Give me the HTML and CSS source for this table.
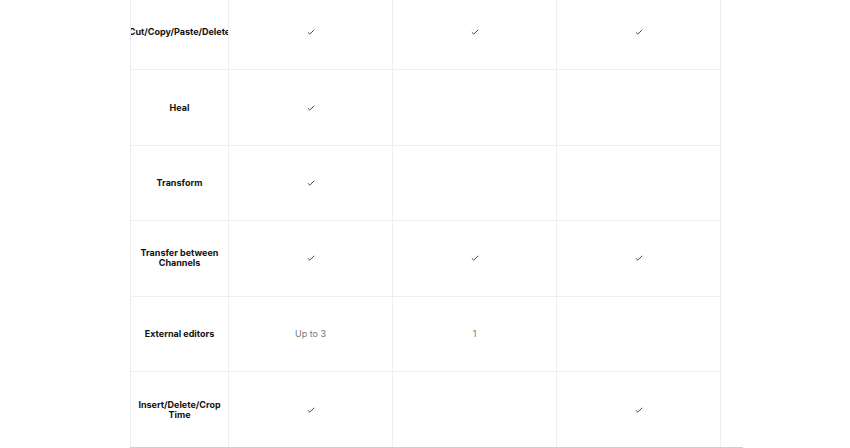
FILE: index.html
```html
<!DOCTYPE html>
<html>
<head>
<meta charset="utf-8">
<link rel="stylesheet" href="styles.css">
</head>
<body>
<div class="page">
  <div class="table">
    <div class="grid">
      <div class="cell label"><span class="nowrap">Cut/Copy/Paste/Delete</span></div>
      <div class="cell"><svg class="check" viewBox="0 0 8 6"><polyline points="0.8,3.2 2.8,5.1 7.2,0.8"/></svg></div>
      <div class="cell"><svg class="check" viewBox="0 0 8 6"><polyline points="0.8,3.2 2.8,5.1 7.2,0.8"/></svg></div>
      <div class="cell"><svg class="check" viewBox="0 0 8 6"><polyline points="0.8,3.2 2.8,5.1 7.2,0.8"/></svg></div>

      <div class="cell label"><span>Heal</span></div>
      <div class="cell"><svg class="check" viewBox="0 0 8 6"><polyline points="0.8,3.2 2.8,5.1 7.2,0.8"/></svg></div>
      <div class="cell"></div>
      <div class="cell"></div>

      <div class="cell label"><span>Transform</span></div>
      <div class="cell"><svg class="check" viewBox="0 0 8 6"><polyline points="0.8,3.2 2.8,5.1 7.2,0.8"/></svg></div>
      <div class="cell"></div>
      <div class="cell"></div>

      <div class="cell label"><span>Transfer between Channels</span></div>
      <div class="cell"><svg class="check" viewBox="0 0 8 6"><polyline points="0.8,3.2 2.8,5.1 7.2,0.8"/></svg></div>
      <div class="cell"><svg class="check" viewBox="0 0 8 6"><polyline points="0.8,3.2 2.8,5.1 7.2,0.8"/></svg></div>
      <div class="cell"><svg class="check" viewBox="0 0 8 6"><polyline points="0.8,3.2 2.8,5.1 7.2,0.8"/></svg></div>

      <div class="cell label"><span>External editors</span></div>
      <div class="cell value">Up to 3</div>
      <div class="cell value">1</div>
      <div class="cell"></div>

      <div class="cell label"><span>Insert/Delete/Crop Time</span></div>
      <div class="cell"><svg class="check" viewBox="0 0 8 6"><polyline points="0.8,3.2 2.8,5.1 7.2,0.8"/></svg></div>
      <div class="cell"></div>
      <div class="cell"><svg class="check" viewBox="0 0 8 6"><polyline points="0.8,3.2 2.8,5.1 7.2,0.8"/></svg></div>
    </div>
  </div>
</div>
</body>
</html>
```

FILE: styles.css
```css
html, body {
  margin: 0;
  padding: 0;
  background: #ffffff;
  overflow: hidden;
}

.page {
  width: 850px;
  height: 448px;
  overflow: hidden;
  padding-left: 130px;
  box-sizing: border-box;
}

.table {
  width: 613px;
  margin-top: -5px;
  border-bottom: 1px solid #cfcfcf;
}

.grid {
  display: grid;
  grid-template-columns: 98px 164px 164px 164px;
  grid-auto-rows: 75.4px;
  width: 591px;
  border-left: 1px solid #eeeeee;
}

.cell {
  display: flex;
  align-items: center;
  justify-content: center;
  overflow: hidden;
  border-right: 1px solid #eeeeee;
  border-bottom: 1px solid #eeeeee;
  font-family: "Inter", "Liberation Sans", sans-serif;
  min-width: 0;
}

.grid .cell:nth-last-child(-n+4) {
  border-bottom: none;
}

.label {
  padding: 0 7px;
  font-weight: 700;
  font-size: 9px;
  line-height: 10px;
  color: #111111;
  text-align: center;
}

.label span {
  flex: none;
  max-width: 84px;
}

.label .nowrap {
  white-space: nowrap;
  max-width: none;
}

.value {
  font-size: 9px;
  color: #777777;
}

.check {
  width: 8px;
  height: 6px;
  fill: none;
  stroke: #333333;
  stroke-width: 0.9;
}
```
